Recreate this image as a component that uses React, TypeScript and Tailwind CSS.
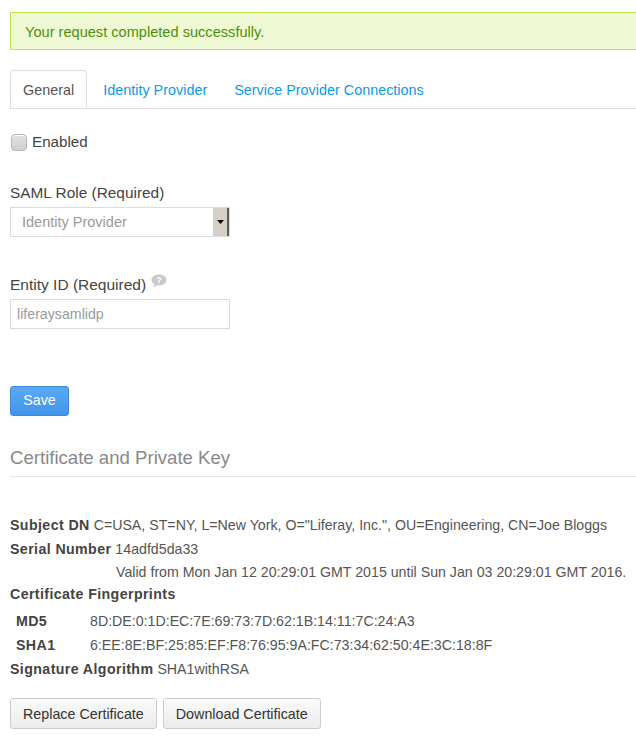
export default function App() {
  return (
    <div className="w-[636px] h-[738px] overflow-hidden bg-white font-['Liberation_Sans',Arial,sans-serif] text-[14.2px] text-[#555]">
      <div className="pt-[12px] pl-[10px]">
        {/* alert */}
        <div className="w-[660px] h-[38px] border border-[#bde34a] bg-[#eff9d3] pl-[14px] pt-[3px] flex items-center text-[14.6px] text-[#4e8f0e]">
          Your request completed successfully.
        </div>

        {/* tabs */}
        <div className="mt-[20px] flex border-b border-[#ddd] w-[640px] text-[14.4px]">
          <div className="-mb-px h-[38px] px-[12px] pt-[3px] flex items-center border border-[#ddd] border-b-white rounded-t-[4px] bg-white text-[#555]">
            General
          </div>
          <div className="ml-[3px] h-[38px] px-[13px] pt-[3px] flex items-center text-[#0b9be3]">Identity Provider</div>
          <div className="ml-[1px] h-[38px] px-[13px] pt-[3px] flex items-center text-[#0b9be3]">Service Provider Connections</div>
        </div>

        <div className="mt-[23px] flex items-center h-[20px]">
          <span className="ml-[1px] w-[16px] h-[17px] rounded-[4px] border border-[#b5b5b5] bg-gradient-to-b from-[#e3e1dd] to-[#d2d0cc] shadow-[inset_0_1px_0_#fff]" />
          <span className="ml-[5px] text-[15.2px] text-[#444]">Enabled</span>
        </div>

        <div className="mt-[31px] leading-[20px] text-[15.4px] text-[#444]">SAML Role (Required)</div>
        <div className="mt-[4px] w-[220px] h-[30px] border border-[#ddd] flex items-stretch">
          <div className="flex-1 flex items-center pl-[11px] pt-[2px] text-[14.5px] text-[#999]">Identity Provider</div>
          <div className="w-[17px] bg-[#d4d0c8] border-r-2 border-r-[#5a5a5a] border-l border-l-white flex items-center justify-center">
            <svg width="7" height="5" viewBox="0 0 7 5">
              <path d="M0 0h7L3.5 4z" fill="#000" />
            </svg>
          </div>
        </div>

        <div className="mt-[38px] leading-[20px] text-[15.5px] text-[#444] flex items-center">
          Entity ID (Required)
          <svg className="ml-[5px] -mt-[9px]" width="16" height="14" viewBox="0 0 16 14">
            <path d="M8 0.5C12.1 0.5 15.5 2.9 15.5 6 15.5 9 12.1 11.4 8 11.4 7.4 11.4 6.8 11.4 6.2 11.3L2.6 13.5 3.5 10.3C1.7 9.3 0.5 7.7 0.5 6 0.5 2.9 3.9 0.5 8 0.5Z" fill="#c9c9c9" />
            <text x="8" y="9.3" textAnchor="middle" fontSize="9" fontWeight="bold" fill="#fff" fontFamily="Liberation Sans, Arial, sans-serif">?</text>
          </svg>
        </div>
        <div className="mt-[4px] w-[220px] h-[30px] border border-[#ddd] flex items-center pl-[6px] pt-[1px] text-[#999]">
          liferaysamlidp
        </div>

        <div className="mt-[57px] w-[59px] h-[30px] rounded-[3px] border border-[#3c8ad8] bg-gradient-to-b from-[#5aa9f4] to-[#4395ea] text-white flex items-center justify-center">
          Save
        </div>

        <div className="mt-[30px] w-[640px] border-b border-[#e5e5e5] pb-[6px]">
          <div className="text-[18.6px] leading-[24px] text-[#888]">Certificate and Private Key</div>
        </div>

        <div className="mt-[36px] text-[#555]">
          <div className="leading-[24px] whitespace-nowrap">
            <span className="font-bold tracking-[0.4px] text-[#444]">Subject DN</span> C=USA, ST=NY, L=New York, O="Liferay, Inc.", OU=Engineering, CN=Joe Bloggs
          </div>
          <div className="leading-[24px]">
            <span className="font-bold tracking-[0.4px] text-[#444]">Serial Number</span> 14adfd5da33
          </div>
          <div className="leading-[22px] pl-[106px] whitespace-nowrap">
            Valid from Mon Jan 12 20:29:01 GMT 2015 until Sun Jan 03 20:29:01 GMT 2016.
          </div>
          <div className="leading-[22px] font-bold tracking-[0.4px] text-[#444]">Certificate Fingerprints</div>
          <div className="mt-[4px] grid grid-cols-[80px_1fr] leading-[24px]">
            <span className="pl-[6px] font-bold tracking-[0.4px] text-[#444]">MD5</span>
            <span>8D:DE:0:1D:EC:7E:69:73:7D:62:1B:14:11:7C:24:A3</span>
            <span className="pl-[6px] font-bold tracking-[0.4px] text-[#444]">SHA1</span>
            <span>6:EE:8E:BF:25:85:EF:F8:76:95:9A:FC:73:34:62:50:4E:3C:18:8F</span>
          </div>
          <div className="leading-[24px]">
            <span className="font-bold tracking-[0.4px] text-[#444]">Signature Algorithm</span> SHA1withRSA
          </div>
        </div>

        <div className="mt-[17px] flex gap-[6px] text-[14.3px]">
          <div className="h-[31px] px-[12px] pt-[2px] flex items-center border border-[#ccc] rounded-[3px] bg-gradient-to-b from-[#fafafa] to-[#ececec] text-[#333]">
            Replace Certificate
          </div>
          <div className="h-[31px] px-[12px] pt-[2px] flex items-center border border-[#ccc] rounded-[3px] bg-gradient-to-b from-[#fafafa] to-[#ececec] text-[#333]">
            Download Certificate
          </div>
        </div>
      </div>
    </div>
  );
}
